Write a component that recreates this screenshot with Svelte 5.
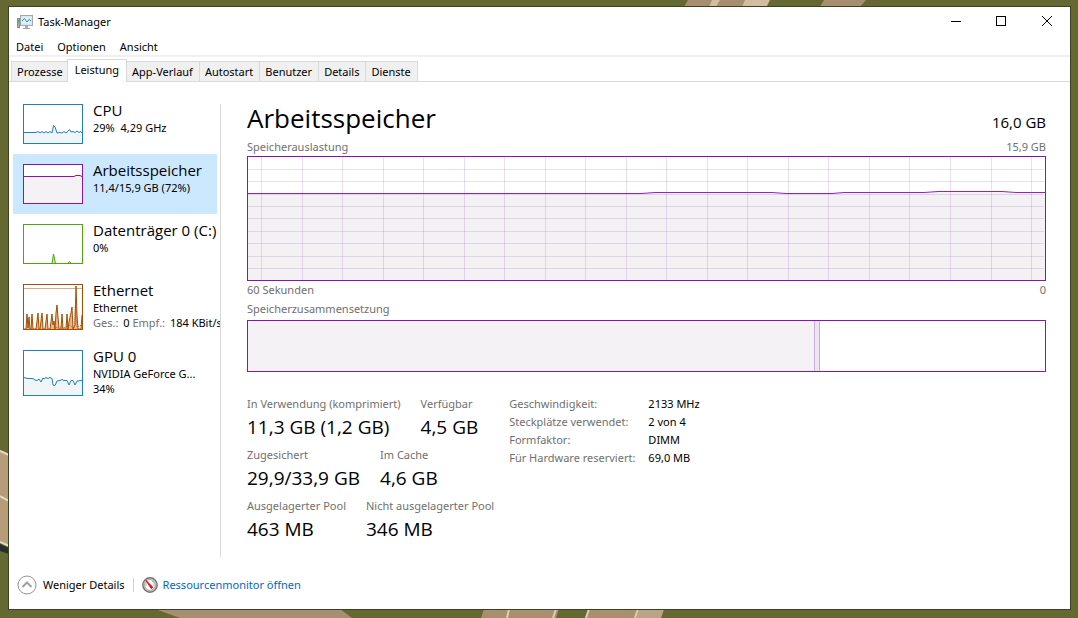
<script lang="ts">
  const menus = ['Datei', 'Optionen', 'Ansicht'];
  const tabs = ['Prozesse', 'Leistung', 'App-Verlauf', 'Autostart', 'Benutzer', 'Details', 'Dienste'];

  const devices = [
    {
      name: 'CPU',
      lines: ['29%  4,29 GHz'],
      color: '#1e82b8',
      fill: '#f0f5fa',
      height: 38,
      points: '0,27.5 12,27.5 14,26.5 16,28 18,26.5 20,28 22,26.5 24,28 26,26.5 28,28 29.5,20.5 31,22 33,28 36,27.5 38,28 40,26.5 42,28 44,26 45.5,24.5 47,27 49,26.5 51,27.5 53,26 55,27.5 57,26.5 58,28',
    },
    {
      name: 'Arbeitsspeicher',
      lines: ['11,4/15,9 GB (72%)'],
      color: '#8b12ae',
      fill: '#f4f2f4',
      height: 38,
      points: '0,11.5 50,11.5 52,10.5 56,10.5 58,11.5',
    },
    {
      name: 'Datenträger 0 (C:)',
      lines: ['0%'],
      color: '#4da60c',
      fill: '#cfe6bd',
      height: 38,
      points: '0,38.5 28,38.5 29.5,29 31.5,38.5 43.5,38.5 45.5,36.5 47.5,38.5 58,38.5',
    },
    {
      name: 'Ethernet',
      lines: ['Ethernet'],
      color: '#a74f01',
      fill: '#e6b896',
      height: 44,
      points: '0,44 2,44 3,29 4,43 5,32 6,44 7,44 8,29 9,44 12,44 14,28 15,44 16,44 18,28 19,44 21,44 23,29 24,44 26,44 28,29 29,40 30,36 31,44 32,28 33,20 34,32 35,44 37,44 38,29 39,44 42,44 43,29 44,44 45,37 47,28 48,22 49,44 51,40 52,1 53,30 54,44 57,44 58,30',
    },
    {
      name: 'GPU 0',
      lines: ['NVIDIA GeForce G...', '34%'],
      color: '#1e82b8',
      fill: '#f0f5fa',
      height: 44,
      points: '0,27 1,26.5 3,27.5 9,27.5 11,29 13,29.5 15,28 17,31 19,27 20,28 22,26.5 24,27.5 26,26.5 28,27.5 29,34 31,34.5 33,30 36,29.5 38,28.5 40,29.5 43,29.5 45,34 47,29.5 49,29.5 51,34 53,30 58,29.5',
    },
  ];

  const memoryLine = '0,36.5 393,36.5 407,35.5 524,35.5 538,36.5 584,36.5 596,35.5 676,35.5 690,34.5 754,34.5 768,35.5 797,35.5';
  const gridColumns = Array.from({ length: 20 }, (_, i) => Math.round(13 + i * 40.53));
  const gridRows = [12, 24, 37, 49, 61, 74, 86, 99, 111];

  const stats = [
    [['In Verwendung (komprimiert)', '11,3 GB (1,2 GB)'], ['Verfügbar', '4,5 GB']],
    [['Zugesichert', '29,9/33,9 GB'], ['Im Cache', '4,6 GB']],
    [['Ausgelagerter Pool', '463 MB'], ['Nicht ausgelagerter Pool', '346 MB']],
  ];

  const hardware = [
    ['Geschwindigkeit:', '2133 MHz'],
    ['Steckplätze verwendet:', '2 von 4'],
    ['Formfaktor:', 'DIMM'],
    ['Für Hardware reserviert:', '69,0 MB'],
  ];

  let activeTab = $state('Leistung');
  let selected = $state('Arbeitsspeicher');
</script>

<div class="desktop">
  <!-- Wallpaper -->
  <svg class="wallpaper" viewBox="0 0 1078 618" preserveAspectRatio="none" aria-hidden="true">
    <rect width="1078" height="618" fill="#656830" />
    <path d="M684 7 688 0H866L860 7z" fill="#a88e70" />
    <path d="M709 7 712 0H720L716 7zM742 7 745 0H770L766 7z" fill="#d2bda0" />
    <path d="M767 7 770 0H824L820 7z" fill="#656830" />
    <path d="M0 450 9 454V546L0 542z" fill="#b79c7a" />
    <path d="M0 451 9 455M0 496 9 501M0 542 9 546" stroke="#e6dac4" stroke-width="2" />
    <path d="M0 544 9 548V554L0 551z" fill="#26302b" />
    <path d="M155 609H340L352 618H180z" fill="#a88e70" />
    <path d="M484 609H559L556 618H481zM588 609H664L661 618H585z" fill="#a98e70" />
    <path d="M509 609 507 618M556 609 553 618M589 609 586 618M638 609 635 618" stroke="#ddceb4" stroke-width="2" />
    <path d="M639 609H664L661 618H636z" fill="#bba485" />
  </svg>

  <div class="window">
    <header class="titlebar">
      <svg class="app-icon" width="16" height="16" viewBox="0 0 16 16" aria-hidden="true">
        <rect x="0.5" y="4.5" width="2" height="9" fill="#a9adb0" stroke="#8b8f92" />
        <rect x="1" y="6" width="1" height="2" fill="#3fb83f" />
        <rect x="3.5" y="1.5" width="12" height="10" fill="#e2e5e7" stroke="#a5a9ac" />
        <rect x="5" y="3" width="9" height="7" fill="#d9f1fb" />
        <path d="M5 7 7.5 4.5 10 8 12 5.5 14 7" fill="none" stroke="#2f8fc4" />
        <path d="M8 12h3v2h2v1H6v-1h2z" fill="#a5a9ac" />
      </svg>
      <span class="title">Task-Manager</span>
      <div class="window-buttons">
        <button aria-label="Minimieren">
          <svg width="12" height="12" viewBox="0 0 12 12"><path d="M2 5.5h10" /></svg>
        </button>
        <button aria-label="Maximieren">
          <svg width="12" height="12" viewBox="0 0 12 12"><rect x="1.5" y="0.5" width="9" height="9" /></svg>
        </button>
        <button aria-label="Schließen">
          <svg width="12" height="12" viewBox="0 0 12 12"><path d="M1 0 11 10M11 0 1 10" /></svg>
        </button>
      </div>
    </header>

    <nav class="menubar">
      {#each menus as menu}
        <button>{menu}</button>
      {/each}
    </nav>

    <div class="tabs" role="tablist">
      {#each tabs as tab}
        <button role="tab" aria-selected={tab === activeTab} class:active={tab === activeTab} onclick={() => (activeTab = tab)}>{tab}</button>
      {/each}
    </div>

    <div class="content">
      <aside class="sidebar">
        {#each devices as device}
          <button class="device" class:selected={device.name === selected} onclick={() => (selected = device.name)}>
            <svg class="thumb" width="60" height={device.height + 2} viewBox="-1 -1 60 {device.height + 2}" aria-hidden="true">
              <rect x="-0.5" y="-0.5" width="59" height={device.height + 1} fill="#fff" />
              <polygon points="0,{device.height} {device.points} 58,{device.height}" fill={device.fill} />
              {#if device.name === 'Ethernet'}
                <path d="M0 3.5H58" stroke="#d6a988" />
                <path d="M30 43 36 42 41 42.5 45 40 50 43 51.5 20 53 42 58 40" fill="none" stroke="#d9622b" stroke-dasharray="1 1" />
              {/if}
              <polyline points={device.points} fill="none" stroke={device.color} />
              <rect x="-0.5" y="-0.5" width="59" height={device.height + 1} fill="none" stroke={device.color} />
            </svg>
            <span class="device-text">
              <span class="device-name">{device.name}</span>
              {#each device.lines as line}
                <span class="device-line">{line}</span>
              {/each}
              {#if device.name === 'Ethernet'}
                <span class="device-line"><i>Ges.:</i> 0 <i>Empf.:</i> 184 KBit/s</span>
              {/if}
            </span>
          </button>
        {/each}
      </aside>

      <main>
        <div class="heading">
          <h1>Arbeitsspeicher</h1>
          <span class="capacity">16,0 GB</span>
        </div>

        <div class="caption"><span>Speicherauslastung</span><span>15,9 GB</span></div>
        <svg class="usage" viewBox="0 0 797 123" preserveAspectRatio="none" role="img" aria-label="Speicherauslastung">
          <polygon points="0,123 {memoryLine} 797,123" fill="#f3f1f4" />
          <g class="grid">
            {#each gridColumns as x}
              <path d="M{x + 0.5} 0V123" />
            {/each}
            {#each gridRows as y}
              <path d="M0 {y + 0.5}H796" />
            {/each}
          </g>
          <polyline points={memoryLine} fill="none" stroke="#9424b4" />
        </svg>
        <div class="caption"><span>60 Sekunden</span><span>0</span></div>

        <div class="caption composition-caption">Speicherzusammensetzung</div>
        <div class="composition">
          <div class="in-use"></div>
          <div class="modified"></div>
        </div>

        <div class="details">
          <div class="stats">
            {#each stats as row}
              <dl class="stat-row">
                {#each row as [label, value]}
                  <div>
                    <dt>{label}</dt>
                    <dd>{value}</dd>
                  </div>
                {/each}
              </dl>
            {/each}
          </div>
          <table class="hardware">
            <tbody>
              {#each hardware as [label, value]}
                <tr><th scope="row">{label}</th><td>{value}</td></tr>
              {/each}
            </tbody>
          </table>
        </div>
      </main>
    </div>

    <footer>
      <button class="fewer">
        <svg width="20" height="20" viewBox="0 0 20 20" aria-hidden="true">
          <circle cx="10" cy="10" r="9" fill="#fff" stroke="#949494" />
          <path d="M5.5 12 10 7.5 14.5 12" fill="none" stroke="#a0a0a0" stroke-width="2" />
        </svg>
        Weniger Details
      </button>
      <a href="#resmon">
        <svg width="16" height="16" viewBox="0 0 16 16" aria-hidden="true">
          <circle cx="8" cy="8" r="7.2" fill="#d6d3cc" stroke="#77726c" stroke-width="1.4" />
          <circle cx="8" cy="8" r="5.4" fill="#fff" stroke="#aaa69f" />
          <path d="M4 9A4 4 0 0 1 6 4M10 4a4 4 0 0 1 2 5" fill="none" stroke="#b5b5b5" />
          <path d="M4 3.5 10.8 10.2 9.2 11.5z" fill="#d3101f" stroke="#d3101f" />
        </svg>
        Ressourcenmonitor öffnen
      </a>
    </footer>
  </div>
</div>

<style>
  :global(body) {
    margin: 0;
  }

  .desktop {
    position: relative;
    display: flex;
    box-sizing: border-box;
    min-height: 100vh;
    padding: 6px 7px 8px 8px;
    font-family: 'Noto Sans', 'Open Sans', sans-serif;
    font-size: 11px;
    line-height: 18px;
    color: #000;
  }

  .wallpaper {
    position: absolute;
    inset: 0;
    width: 100%;
    height: 100%;
  }

  .window {
    position: relative;
    display: flex;
    flex-direction: column;
    flex: 1;
    min-width: 0;
    border: 1px solid #3d3f26;
    background: #fff;
  }

  button {
    margin: 0;
    padding: 0;
    border: 0;
    background: none;
    font: inherit;
    color: inherit;
    text-align: left;
    white-space: nowrap;
  }

  .titlebar {
    display: flex;
    align-items: center;
    height: 30px;
    padding-left: 8px;
  }

  .title {
    margin-left: 5px;
  }

  .window-buttons {
    display: flex;
    height: 100%;
    margin-left: auto;
  }

  .window-buttons button {
    display: flex;
    align-items: center;
    justify-content: center;
    width: 46px;
  }

  .window-buttons svg {
    fill: none;
    stroke: #000;
  }

  .menubar {
    display: flex;
    gap: 14px;
    height: 17px;
    padding: 1px 7px 0;
    border-bottom: 2px solid #f0f0f0;
  }

  .tabs {
    display: flex;
    align-items: flex-end;
    height: 24px;
    padding-left: 2px;
    border-bottom: 1px solid #d9d9d9;
  }

  .tabs button {
    height: 20px;
    padding: 1px 6px 0 5px;
    border: 1px solid #d9d9d9;
    border-width: 1px 1px 0 0;
    background: #f0f0f0;
  }

  .tabs button:first-child {
    border-left-width: 1px;
  }

  .tabs .active {
    height: 23px;
    margin: 0 0 -1px -3px;
    padding: 0 7px 2px;
    border-left-width: 1px;
    background: #fff;
  }

  .content {
    display: flex;
    flex: 1;
  }

  .sidebar {
    flex: none;
    width: 207px;
    margin: 12px 0 0 4px;
    overflow: hidden;
  }

  .device {
    display: flex;
    align-items: flex-start;
    gap: 10px;
    width: 204px;
    padding: 7px 0 10px 10px;
  }

  .selected {
    background: #cce8ff;
  }

  .thumb {
    flex: none;
    margin-top: 3px;
  }

  .device-name {
    display: block;
    margin-bottom: 1px;
    font-family: 'Open Sans', 'Noto Sans', sans-serif;
    font-size: 15px;
    line-height: 18px;
  }

  .device-line {
    display: block;
    line-height: 15px;
    white-space: pre;
  }

  .device-line i {
    margin-right: 2px;
    font-style: normal;
    color: #707070;
  }

  main {
    flex: 1;
    min-width: 0;
    margin-top: 22px;
    padding: 0 24px 0 26px;
    border-left: 1px solid #d9d9d9;
  }

  .heading {
    display: flex;
    align-items: baseline;
    justify-content: space-between;
    height: 34px;
    font-family: 'Open Sans', 'Noto Sans', sans-serif;
  }

  h1 {
    margin: 0;
    font-size: 26px;
    font-weight: 400;
    line-height: 28px;
  }

  .capacity {
    font-size: 15px;
  }

  .caption {
    display: flex;
    justify-content: space-between;
    color: #707070;
  }

  .usage {
    display: block;
    box-sizing: border-box;
    width: 100%;
    height: 125px;
    border: 1px solid #8b12ae;
  }

  .grid {
    stroke: #7a2896;
    stroke-opacity: 0.15;
  }

  .composition-caption {
    padding: 1px 0 2px;
  }

  .composition {
    display: flex;
    box-sizing: border-box;
    height: 52px;
    border: 1px solid #8b12ae;
  }

  .in-use {
    width: 71%;
    background: #f4f2f5;
  }

  .modified {
    width: 4px;
    border: 1px solid #cbaed5;
    border-width: 0 1px;
    background: #ece4ef;
  }

  .details {
    display: flex;
    align-items: flex-start;
    gap: 15px;
    margin-top: 23px;
  }

  .stats {
    display: flex;
    flex-direction: column;
    gap: 5px;
    white-space: nowrap;
  }

  .stat-row {
    display: flex;
    gap: 20px;
    margin: 0;
  }

  dt,
  th {
    color: #707070;
    font-weight: 400;
    text-align: left;
  }

  dd {
    margin: 0;
    font-family: 'Open Sans', 'Noto Sans', sans-serif;
    font-size: 19px;
    line-height: 28px;
  }

  .hardware {
    border-collapse: collapse;
    white-space: nowrap;
  }

  th,
  td {
    padding: 0;
  }

  th {
    padding-right: 13px;
  }

  footer {
    display: flex;
    align-items: center;
    height: 49px;
    padding: 3px 8px 0;
  }

  .fewer,
  footer a {
    display: flex;
    align-items: center;
    gap: 6px;
  }

  .fewer::after {
    content: '';
    width: 1px;
    height: 14px;
    margin: 0 8px 0 2px;
    background: #d0d0d0;
  }

  footer a {
    gap: 5px;
    color: #0066cc;
    text-decoration: none;
  }
</style>
